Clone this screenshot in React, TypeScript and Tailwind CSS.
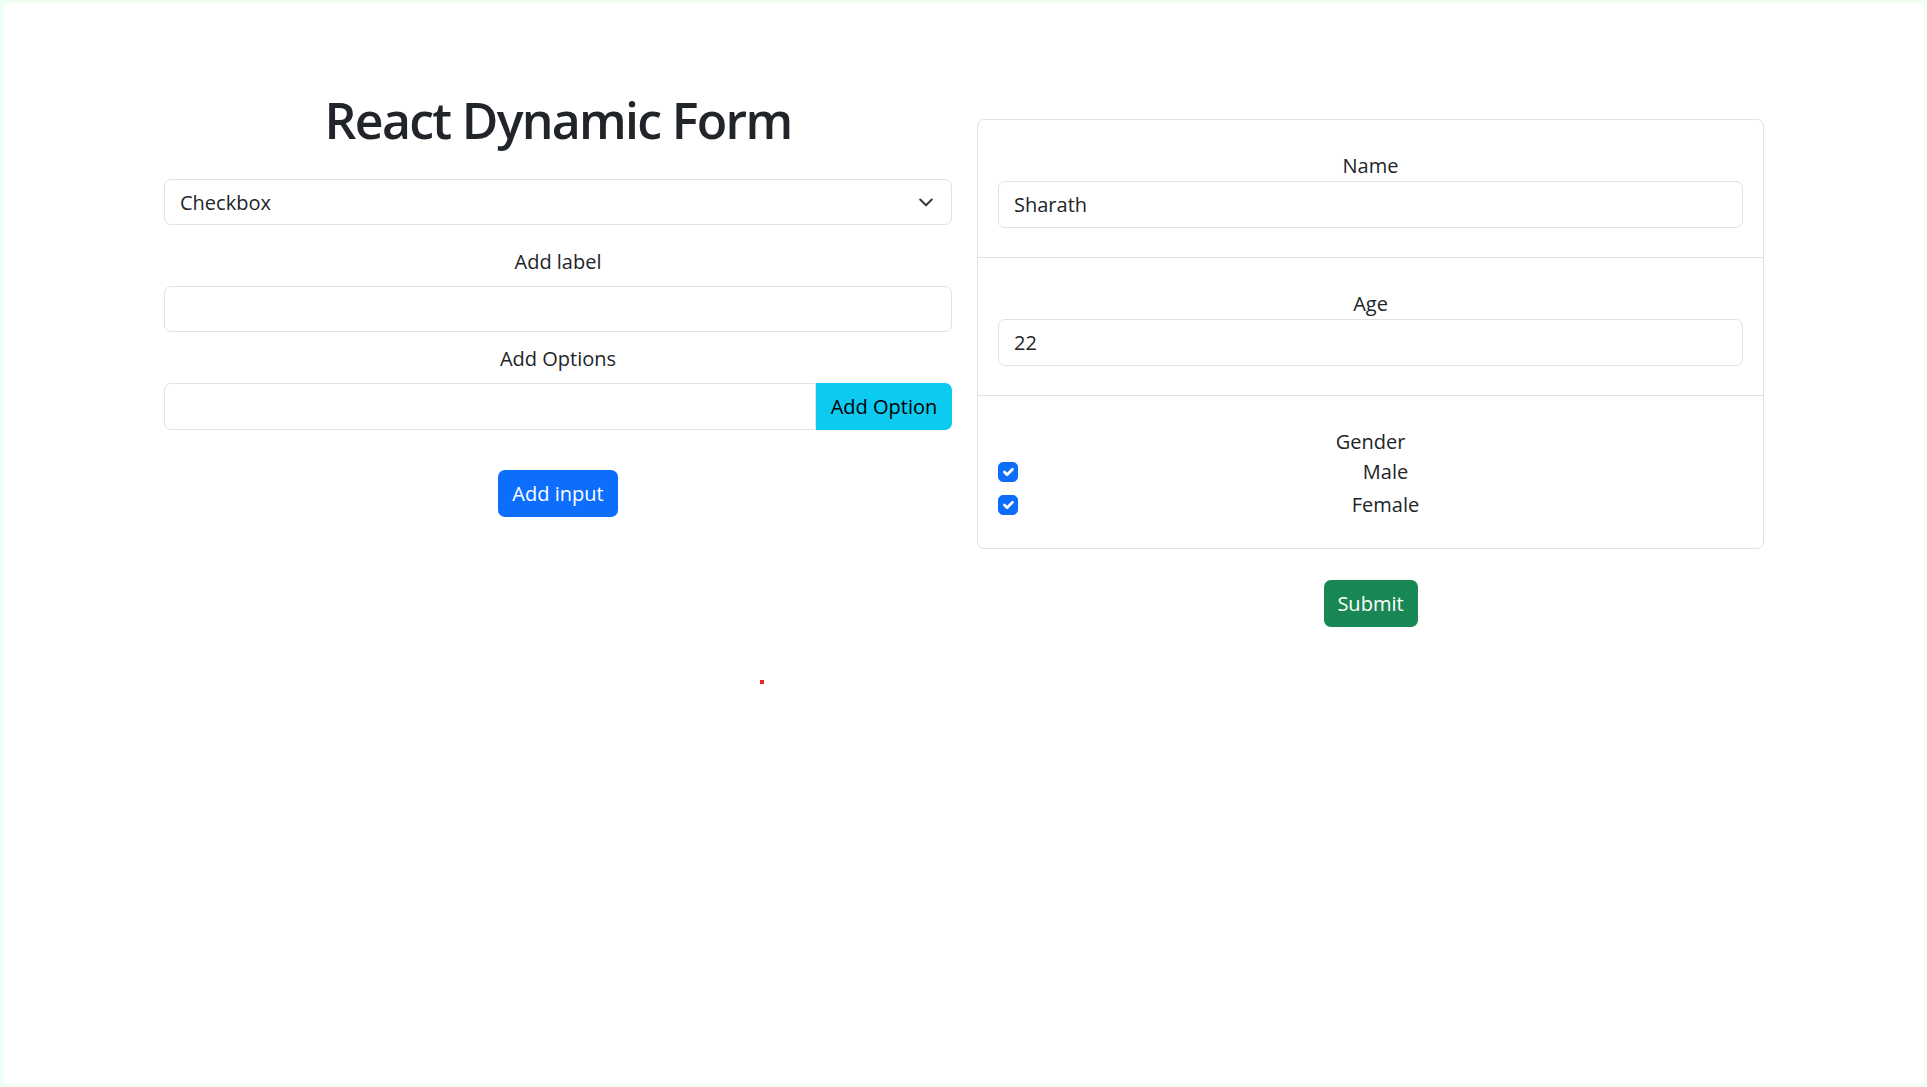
import React from "react";

const font = { fontFamily: '"Open Sans", "Noto Sans", Arial, sans-serif' };

function Chevron() {
  return (
    <svg width="14" height="9" viewBox="0 0 14 9" fill="none" className="shrink-0 mr-[3px]">
      <path d="M1.2 1.5l5.8 5.8 5.8-5.8" stroke="#343a40" strokeWidth="2" strokeLinecap="round" strokeLinejoin="round" />
    </svg>
  );
}

function CheckBox() {
  return (
    <span className="w-[20px] h-[20px] rounded-[5px] bg-[#0d6efd] border border-[#0d6efd] flex items-center justify-center shrink-0 mt-[5px]">
      <svg width="20" height="20" viewBox="0 0 20 20" fill="none">
        <path d="M6 10l3 3 6-6" stroke="#fff" strokeWidth="3" strokeLinecap="round" strokeLinejoin="round" />
      </svg>
    </span>
  );
}

export default function App() {
  return (
    <div className="w-[1927px] h-[1087px] bg-[#f0fff4] pt-[3px] pl-[4px] pr-[3px] pb-[3px]" style={font}>
      <div className="relative w-full h-full bg-white text-[#212529] text-[20px] leading-[30px]">
        <div className="flex items-start pl-[160px] gap-[25px] pt-[87px]">
          {/* Left column */}
          <div className="w-[788px] flex flex-col">
            <h1 className="text-[50px] leading-[60px] font-semibold text-center tracking-[-1.7px]">React Dynamic Form</h1>
            <div className="mt-[29px] h-[46px] border border-[#dee2e6] rounded-[7px] flex items-center justify-between pl-[15px] pr-[15px]">
              <span className="pt-[1px]">Checkbox</span>
              <Chevron />
            </div>
            <div className="mt-[22px] text-center">Add label</div>
            <div className="mt-[9px] h-[46px] border border-[#dee2e6] rounded-[7px]" />
            <div className="mt-[12px] text-center">Add Options</div>
            <div className="mt-[9px] h-[47px] flex">
              <div className="flex-1 border border-[#dee2e6] rounded-l-[7px]" />
              <div className="w-[136px] bg-[#0dcaf0] text-black rounded-r-[7px] flex items-center justify-center">
                Add Option
              </div>
            </div>
            <div className="mt-[40px] flex justify-center">
              <div className="w-[120px] h-[47px] bg-[#0d6efd] text-white rounded-[7px] flex items-center justify-center">
                Add input
              </div>
            </div>
          </div>

          {/* Right column */}
          <div className="w-[787px] flex flex-col mt-[29px]">
            <div className="border border-[#dee2e6] rounded-[7px]">
              <div className="px-[20px] pt-[31px] pb-[29px] border-b border-[#dee2e6]">
                <div className="text-center">Name</div>
                <div className="h-[47px] border border-[#dee2e6] rounded-[7px] flex items-center pl-[15px]">Sharath</div>
              </div>
              <div className="px-[20px] pt-[31px] pb-[29px] border-b border-[#dee2e6]">
                <div className="text-center">Age</div>
                <div className="h-[47px] border border-[#dee2e6] rounded-[7px] flex items-center pl-[15px]">22</div>
              </div>
              <div className="px-[20px] pt-[31px] pb-[28px]">
                <div className="text-center">Gender</div>
                <div className="flex items-start h-[30px]">
                  <CheckBox />
                  <div className="flex-1 pl-[10px] text-center">Male</div>
                </div>
                <div className="flex items-start h-[30px] mt-[3px]">
                  <CheckBox />
                  <div className="flex-1 pl-[10px] text-center">Female</div>
                </div>
              </div>
            </div>
            <div className="mt-[31px] flex justify-center">
              <div className="w-[94px] h-[47px] bg-[#198754] text-white rounded-[7px] flex items-center justify-center">
                Submit
              </div>
            </div>
          </div>
        </div>
        <div className="absolute left-[756px] top-[677px] w-[4px] h-[4px] bg-[#e8262b]" />
      </div>
    </div>
  );
}
